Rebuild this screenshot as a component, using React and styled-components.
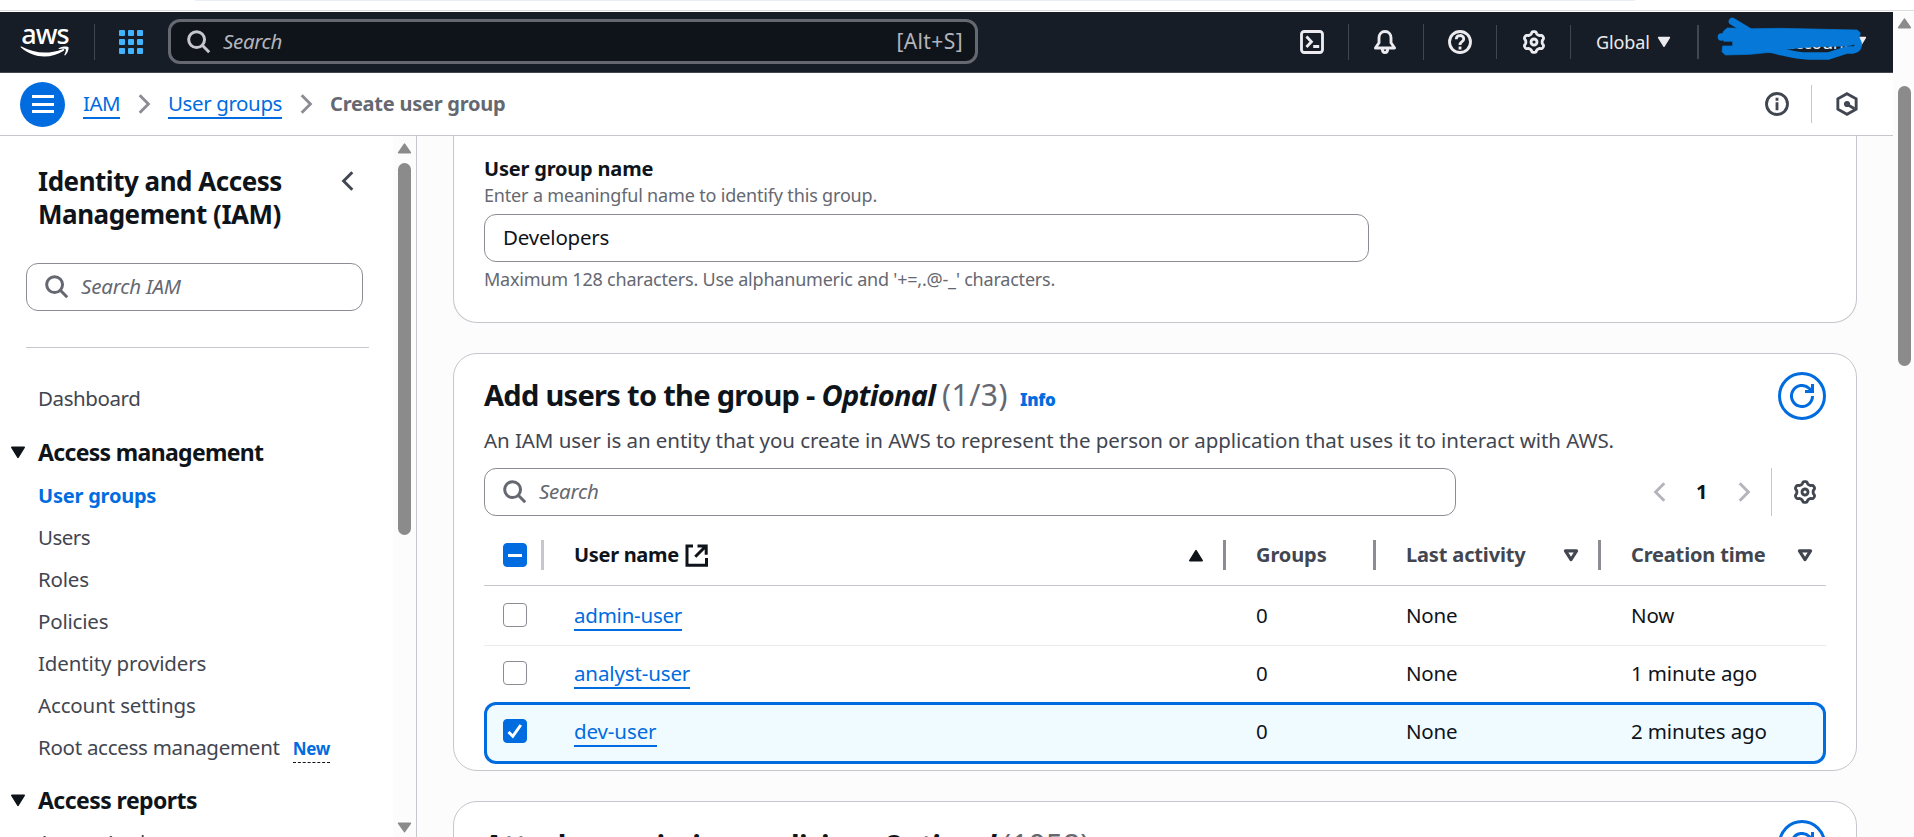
import React from "react";
import styled, { createGlobalStyle, css } from "styled-components";

const c = {
  blue: "#006ce0",
  ink: "#0f141a",
  body: "#424650",
  muted: "#656871",
  border: "#c6c6cd",
  inputBorder: "#8c8c94",
  canvas: "#fcfcfc",
  nav: "#161d26",
};

const Global = createGlobalStyle`
  * { box-sizing: border-box; }
  body { margin: 0; overflow: hidden; background: #fff; }
  svg { display: block; flex: none; }
`;

const Page = styled.div`
  width: 1914px;
  height: 837px;
  display: flex;
  flex-direction: column;
  overflow: hidden;
  background: #fff;
  color: ${c.ink};
  font-family: "Noto Sans", "Open Sans", sans-serif;
  font-size: 20.5px;
  line-height: 30px;
`;
const BrowserEdge = styled.div`
  flex: none;
  height: 12px;
  padding-left: 195px;
  border-bottom: 1px solid #fff;
  box-shadow: inset 0 -1px 0 #dadce0;
`;
const AddressBar = styled.div`
  width: 1440px;
  height: 1px;
  background: #e9eef8;
`;
const Frame = styled.div`
  flex: 1;
  min-height: 0;
  display: flex;
`;
const Console = styled.div`
  width: 1893px;
  display: flex;
  flex-direction: column;
  min-height: 0;
`;

const Txt = styled.span`
  white-space: pre;
  letter-spacing: ${(p) => p.$ls || 0}px;
`;

/* ---------- scrollbars ---------- */
const Track = styled.div`
  flex: none;
  width: ${(p) => p.$w}px;
  background: ${c.canvas};
  display: flex;
  flex-direction: column;
  align-items: center;
  padding: ${(p) => p.$pad};
`;
const Thumb = styled.div`
  width: 13px;
  height: ${(p) => p.$h}px;
  margin-top: ${(p) => p.$mt}px;
  border-radius: 7px;
  background: #8b8b8b;
`;
const ScrollArrow = ({ down }) => (
  <svg width="15" height="11" viewBox="0 0 15 11">
    <path
      d={down ? "M1.6 1.2h11.8L7.5 9.6z" : "M1.6 9.6h11.8L7.5 1.2z"}
      fill="#8b8b8b"
      stroke="#8b8b8b"
      strokeWidth="1.6"
      strokeLinejoin="round"
    />
  </svg>
);
const Grow = styled.div`
  flex: 1;
`;

/* ---------- icons ---------- */
const Icon = ({ size = 24, color = c.body, sw = 2, children }) => (
  <svg width={size} height={size} viewBox="0 0 16 16" fill="none" stroke={color} strokeWidth={sw}>
    {children}
  </svg>
);
const gearPath = (() => {
  const pts = [];
  for (let i = 0; i < 144; i++) {
    const a = (i / 144) * Math.PI * 2;
    const r = 6.2 + 0.8 * Math.tanh(1.7 * Math.cos(6 * a));
    pts.push(`${(8 + r * Math.sin(a)).toFixed(2)} ${(8 - r * Math.cos(a)).toFixed(2)}`);
  }
  return `M${pts.join("L")}Z`;
})();
const Gear = ({ color }) => (
  <Icon color={color} sw={1.9}>
    <path d={gearPath} strokeLinejoin="round" />
    <circle cx="8" cy="8" r="2" />
  </Icon>
);
const SearchIcon = ({ color = c.muted }) => (
  <Icon color={color} sw={2}>
    <circle cx="6.4" cy="6.4" r="5.3" />
    <path d="m10.2 10.200 4.600 4.600" />
  </Icon>
);
const Chevron = ({ left, color = c.inputBorder, sw = 2.9 }) => (
  <svg width="13" height="20" viewBox="0 0 13 20" fill="none" stroke={color} strokeWidth={sw}>
    <path d={left ? "M11.3 1.2 2.6 10l8.7 8.8" : "M1.7 1.2l8.7 8.8-8.7 8.8"} />
  </svg>
);
const Refresh = () => (
  <Icon color={c.blue}>
    <path d="M15 8a7 7 0 1 1-2.1-5l1.6 1.6" />
    <path d="M15 0v5h-5" />
  </Icon>
);
const Caret = ({ up, open, color = c.ink, w = 16, h = 13 }) => (
  <svg width={w} height={h} viewBox="0 0 16 13">
    <path
      d={up ? "M1.8 11.6h12.4L8 1.6z" : open ? "M2.4 1.9h11.2L8 10.6z" : "M1.8 1.4h12.4L8 11.4z"}
      fill={open ? "none" : color}
      stroke={color}
      strokeWidth={open ? 3.1 : 1.6}
      strokeLinejoin="round"
    />
  </svg>
);

/* ---------- top navigation ---------- */
const TopNav = styled.header`
  flex: none;
  height: 61px;
  display: flex;
  align-items: center;
  padding: 0 0 1px 20px;
  background: ${c.nav};
  border-bottom: 1px solid #424650;
`;
const Logo = styled.div`
  width: 50px;
  height: 60px;
  padding-top: 10px;
  display: flex;
  flex-direction: column;
  align-items: center;
  color: #fff;
  font-weight: 500;
  font-size: 27px;
  line-height: 24px;
`;
const NavRule = styled.div`
  flex: none;
  width: ${(p) => p.$w || 1}px;
  height: ${(p) => p.$h || 36}px;
  margin: 0 ${(p) => p.$r}px 0 ${(p) => p.$l}px;
  background: #424650;
`;
const AppGrid = styled.div`
  display: grid;
  grid-template-columns: repeat(3, 6px);
  gap: 3px;
`;
const Dot = styled.i`
  height: 6px;
  border-radius: 1px;
  background: #42b4ff;
`;
const NavSearch = styled.div`
  width: 810px;
  height: 45px;
  margin: 0 322px 0 25px;
  padding: 0 12px 0 16px;
  display: flex;
  align-items: center;
  gap: 12px;
  border: 3px solid ${c.muted};
  border-radius: 12px;
  background: ${c.ink};
  color: #b4b4bb;
`;
const Shortcut = styled(Txt)`
  padding-bottom: 2px;
  font-size: 21px;
`;
const Placeholder = styled(Txt)`
  flex: 1;
  padding-bottom: 2px;
  font-style: italic;
`;
const Region = styled.div`
  display: flex;
  align-items: center;
  gap: 7px;
  color: #ebebf0;
  font-size: 18px;
`;
const Account = styled(Region)`
  position: relative;
  width: 168px;
  padding-left: 62px;
  gap: 3px;
  height: 60px;
`;
const Scribble = styled.svg`
  position: absolute;
  left: -21px;
  top: -12px;
`;

/* ---------- breadcrumbs ---------- */
const CrumbBar = styled.nav`
  flex: none;
  height: 63px;
  display: flex;
  align-items: center;
  padding-left: 20px;
  border-bottom: 1px solid ${c.border};
`;
const MenuButton = styled.div`
  width: 45px;
  height: 45px;
  margin-right: 18px;
  display: flex;
  flex-direction: column;
  justify-content: center;
  align-items: center;
  gap: 4.5px;
  border-radius: 50%;
  background: ${c.blue};
`;
const Bar = styled.i`
  width: 22px;
  height: 3px;
  background: #fff;
`;
const Link = styled(Txt)`
  display: inline-block;
  height: 29px;
  line-height: 27px;
  color: ${c.blue};
  border-bottom: 2px solid ${c.blue};
`;
const CrumbGap = styled.div`
  margin: 0 17px 0 18px;
`;
const Current = styled(Txt)`
  flex: 1;
  font-size: 20px;
  font-weight: 700;
  color: ${c.muted};
`;
const BarRule = styled.div`
  width: 1px;
  height: ${(p) => p.$h}px;
  margin: 0 ${(p) => p.$r}px 0 ${(p) => p.$l}px;
  background: ${c.border};
`;

/* ---------- side navigation ---------- */
const Body = styled.div`
  flex: 1;
  min-height: 0;
  display: flex;
`;
const Side = styled.aside`
  flex: none;
  width: 417px;
  display: flex;
  overflow: hidden;
  border-right: 1px solid ${c.border};
`;
const SideContent = styled.div`
  width: 393px;
  height: 701px;
  overflow: hidden;
`;
const SideHead = styled.div`
  display: flex;
  padding: 29px 39px 0 38px;
`;
const SideTitle = styled.div`
  flex: 1;
  font-size: 26px;
  line-height: 33px;
  font-weight: 700;
  letter-spacing: -0.48px;
`;
const Collapse = styled.div`
  padding-top: 6px;
`;
const Field = styled.div`
  width: ${(p) => p.$w}px;
  height: 48px;
  padding-left: ${(p) => p.$pad || 17}px;
  display: flex;
  align-items: center;
  gap: 12px;
  border: 1px solid ${c.inputBorder};
  border-radius: 12px;
  background: #fff;
  color: ${(p) => (p.$filled ? c.ink : c.muted)};
`;
const Value = styled(Txt)`
  padding-bottom: 2px;
`;
const SideSearch = styled.div`
  width: 343px;
  margin: 32px 0 0 26px;
  padding-bottom: 36px;
  border-bottom: 1px solid ${c.border};
`;
const NavList = styled.div`
  display: flex;
  flex-direction: column;
  gap: 12px;
  padding: ${(p) => p.$pt}px 0 0 38px;
`;
const NavItem = styled.div`
  display: flex;
  align-items: center;
  height: 30px;
  white-space: nowrap;
  color: ${c.body};
  ${(p) =>
    p.$active &&
    css`
      padding-top: 1px;
      font-size: 20px;
      font-weight: 700;
      color: ${c.blue};
    `}
`;
const Section = styled.div`
  display: flex;
  align-items: center;
  gap: 12px;
  height: 30px;
  margin-top: ${(p) => p.$mt}px;
  padding-left: 10px;
  font-size: 23px;
  font-weight: 700;
`;
const NewTag = styled(Txt)`
  height: 27px;
  margin: 4px 0 0 13px;
  font-size: 17px;
  line-height: 25px;
  font-weight: 700;
  color: ${c.blue};
  border-bottom: 1px dashed ${c.ink};
`;

/* ---------- main content ---------- */
const Main = styled.main`
  flex: 1;
  min-width: 0;
  padding-left: 36px;
  display: flex;
  flex-direction: column;
  gap: 30px;
  overflow: hidden;
  background: ${c.canvas};
`;
const Card = styled.section`
  flex: none;
  width: 1404px;
  height: ${(p) => p.$h}px;
  padding: 0 30px;
  border: 1px solid ${c.border};
  border-radius: 24px;
  background: #fff;
  ${(p) =>
    p.$cut &&
    css`
      border-top: 0;
      border-radius: 0 0 24px 24px;
    `}
`;
const Label = styled.div`
  height: 47px;
  padding-top: 18px;
  font-size: 20px;
  font-weight: 700;
`;
const Hint = styled.div`
  height: ${(p) => p.$h}px;
  line-height: ${(p) => p.$lh}px;
  font-size: 18px;
  color: ${c.muted};
`;
const Heading = styled.div`
  display: flex;
  align-items: center;
  padding-top: 18px;
`;
const H2 = styled.h2`
  flex: 1;
  margin: 2px 0 0;
  font-size: 29px;
  line-height: 36px;
  font-weight: 700;
  white-space: pre;
`;
const Count = styled(Txt)`
  font-weight: 400;
  font-size: 30px;
  color: ${c.muted};
`;
const Info = styled(Txt)`
  margin-left: 12px;
  font-size: 17px;
  color: ${c.blue};
`;
const RoundButton = styled.div`
  width: 48px;
  height: 48px;
  display: grid;
  place-items: center;
  border: 3px solid ${c.blue};
  border-radius: 50%;
`;
const Desc = styled.div`
  height: 48px;
  padding-top: 5px;
  color: ${c.body};
`;
const Tools = styled.div`
  display: flex;
  align-items: center;
  padding-right: 9px;
`;
const PageNo = styled.div`
  margin: 0 31px 0 30px;
  width: 11px;
  font-size: 20px;
  font-weight: 700;
`;

const rowGrid = css`
  display: grid;
  grid-template-columns: 90px 682px 150px 225px 195px;
  align-items: center;
`;
const HeadRow = styled.div`
  ${rowGrid}
  height: 70px;
  border-bottom: 1px solid ${c.border};
  font-size: 20px;
  font-weight: 700;
  color: ${c.body};
`;
const HeadCell = styled.div`
  display: flex;
  align-items: center;
  height: 30px;
  color: ${(p) => (p.$dark ? c.ink : c.body)};
  margin-top: 9px;
  border-right: ${(p) => (p.$last ? 0 : 3)}px solid ${(p) => p.$rule || c.inputBorder};
  margin-right: ${(p) => p.$mr || 0}px;
  padding-right: ${(p) => p.$pr || 0}px;
`;
const Row = styled.div`
  ${rowGrid}
  height: ${(p) => p.$h}px;
  padding-bottom: 2px;
  border-bottom: ${(p) => (p.$line ? 1 : 0)}px solid #ebebf0;
  ${(p) =>
    p.$selected &&
    css`
      padding-bottom: 4px;
      background: #f0fbff;
      border-radius: 12px;
      box-shadow: inset 0 0 0 3px ${c.blue};
    `}
`;
const Check = styled.div`
  width: 24px;
  height: 24px;
  margin-left: 19px;
  display: grid;
  place-items: center;
  border-radius: 4px;
  border: 1.5px solid ${(p) => (p.$on ? c.blue : c.inputBorder)};
  background: ${(p) => (p.$on ? c.blue : "#fff")};
`;
const UserCell = styled.div`
  line-height: 0;
  padding-top: 3px;
`;

const navItems = [
  ["User groups", -0.22],
  ["Users", -0.5],
  ["Roles", -0.2],
  ["Policies", -0.2],
  ["Identity providers", -0.12],
  ["Account settings", -0.14],
  ["Root access management", -0.28],
];
const users = [
  { name: "admin-user", ls: -0.23, time: "Now", h: 60, line: true },
  { name: "analyst-user", ls: -0.13, time: "1 minute ago", h: 56 },
  { name: "dev-user", ls: -0.1, time: "2 minutes ago", h: 62, selected: true },
];

const NavIcon = ({ children }) => (
  <Icon color="#ebebf0" sw={1.9}>
    {children}
  </Icon>
);

export default function App() {
  return (
    <Page>
      <Global />
      <BrowserEdge>
        <AddressBar />
      </BrowserEdge>
      <Frame>
        <Console>
          <TopNav>
            <Logo>
              <Txt $ls={-1}>aws</Txt>
              <svg width="50" height="12" viewBox="0 0 50 12" fill="#fff">
                <path d="M1 1.6C0 .8 1 .2 2 .8 15 7.800 29 8.300 42.500 3.200c1.600-.6 2.500.6 1.200 1.500C31 13 14 13 1 1.600Z" />
                <path d="M38.800 2.200C41.500.2 47 0 48.300 1c1 1.300-.5 6-3 8.200-.6.4-1.200.1-.8-.6 1-2.200 1.700-4.600 1.200-5.400-.7-.8-3.600-.6-6.200-.2-.8.1-1.200-.3-.7-.8Z" />
              </svg>
            </Logo>
            <NavRule $l={24} $r={24} />
            <AppGrid>
              {Array.from({ length: 9 }, (_, i) => (
                <Dot key={i} />
              ))}
            </AppGrid>
            <NavSearch>
              <SearchIcon color="#c6c6cd" />
              <Placeholder $ls={-0.35}>Search</Placeholder>
              <Shortcut $ls={0.4}>[Alt+S]</Shortcut>
            </NavSearch>
            <NavIcon>
              <rect x="1" y="1" width="14" height="14" rx="1.8" />
              <path d="m4.300 4.400 3.300 3.500-3.300 3.500M8.800 11h4" />
            </NavIcon>
            <NavRule $l={24} $r={24} />
            <NavIcon>
              <path d="M8 1C5.500 1 4 2.900 4 5.200v3.300L1.600 12h12.800L12 8.500V5.200C12 2.900 10.500 1 8 1Z" strokeLinejoin="round" />
              <path d="M6.200 12.500c0 3.400 3.600 3.400 3.600 0" />
            </NavIcon>
            <NavRule $l={26} $r={24} />
            <NavIcon>
              <circle cx="8" cy="8" r="7" />
              <path d="M5.500 6.200c0-3.300 5-3.300 5-.2C10.500 8 8 7.600 8 10M8 11v2" />
            </NavIcon>
            <NavRule $l={24} $r={25} $h={34} />
            <Gear color="#ebebf0" />
            <NavRule $l={24} $r={25} $h={34} />
            <Region>
              <Txt $ls={-0.1}>Global</Txt>
              <Caret color="#ebebf0" w={14} h={12} />
            </Region>
            <NavRule $l={26} $r={24} $h={34} $w={2} />
            <Account>
              <Txt $ls={-0.3}>account</Txt>
              <Caret color="#ebebf0" w={14} h={12} />
              <Scribble width="168" height="73" viewBox="6 0 504 219">
                <g fill="#0578d8" stroke="#0578d8" strokeLinecap="round" strokeLinejoin="round">
                  <path d="M97 64l46 28" strokeWidth="22" fill="none" />
                  <circle cx="64" cy="111" r="11" strokeWidth="0" />
                  <path d="M64 108 72 92 82 84 160 86 240 85 472 90 481 99 478 112 484 130 440 138 340 140 265 147 210 157 150 163 76 165 66 155 68 138H98V124H72Z" strokeWidth="2" />
                  <path d="M205 146c50 10 75 22 120 22h60l55-18h20c12-2 16-10 14-20" strokeWidth="22" fill="none" />
                </g>
              </Scribble>
            </Account>
          </TopNav>

          <CrumbBar>
            <MenuButton>
              <Bar />
              <Bar />
              <Bar />
            </MenuButton>
            <Link $ls={-0.55}>IAM</Link>
            <CrumbGap>
              <Chevron />
            </CrumbGap>
            <Link $ls={-0.39}>User groups</Link>
            <CrumbGap>
              <Chevron />
            </CrumbGap>
            <Current $ls={-0.25}>Create user group</Current>
            <Icon sw={1.9}>
              <circle cx="8" cy="8" r="7" />
              <path d="M8 3.800v2M8 6.800v5.400" />
            </Icon>
            <BarRule $h={38} $l={22} $r={23} />
            <Icon sw={1.9}>
              <path d="M8 1.100 14.100 4.500v7L8 14.900 1.900 11.500v-7z" />
              <circle cx="8" cy="8" r="1.100" />
              <path d="m8.500 8.500 4.500 2.600" />
            </Icon>
            <BarRule $h={0} $l={33} $r={0} />
          </CrumbBar>

          <Body>
            <Side>
              <SideContent>
                <SideHead>
                  <SideTitle>
                    Identity and Access
                    <br />
                    Management (IAM)
                  </SideTitle>
                  <Collapse>
                    <Chevron left color={c.body} />
                  </Collapse>
                </SideHead>
                <SideSearch>
                  <Field $w={337} $pad={18}>
                    <SearchIcon />
                    <Placeholder $ls={-0.2}>Search IAM</Placeholder>
                  </Field>
                </SideSearch>
                <NavList $pt={35}>
                  <NavItem>
                    <Txt $ls={-0.42}>Dashboard</Txt>
                  </NavItem>
                </NavList>
                <Section $mt={24}>
                  <Caret />
                  <Txt $ls={-0.67}>Access management</Txt>
                </Section>
                <NavList $pt={13}>
                  {navItems.map(([t, ls], i) => (
                    <NavItem key={t} $active={i === 0}>
                      <Txt $ls={ls}>{t}</Txt>
                      {i === 6 && <NewTag $ls={-0.3}>New</NewTag>}
                    </NavItem>
                  ))}
                </NavList>
                <Section $mt={23}>
                  <Caret />
                  <Txt $ls={-0.55}>Access reports</Txt>
                </Section>
                <NavList $pt={12}>
                  <NavItem>
                    <Txt $ls={-0.45}>Access Analyzer</Txt>
                  </NavItem>
                </NavList>
              </SideContent>
              <Track $w={23} $pad="7px 0 4px">
                <ScrollArrow />
                <Thumb $h={372} $mt={9} />
                <Grow />
                <ScrollArrow down />
              </Track>
            </Side>

            <Main>
              <Card $h={187} $cut>
                <Label>
                  <Txt $ls={-0.2}>User group name</Txt>
                </Label>
                <Hint $h={31} $lh={24}>
                  <Txt $ls={-0.17}>Enter a meaningful name to identify this group.</Txt>
                </Hint>
                <Field $w={885} $pad={18} $filled>
                  <Value $ls={-0.2}>Developers</Value>
                </Field>
                <Hint $h={36} $lh={35}>
                  <Txt $ls={-0.21}>Maximum 128 characters. Use alphanumeric and '+=,.@-_' characters.</Txt>
                </Hint>
              </Card>

              <Card $h={418}>
                <Heading>
                  <H2>
                    <Txt $ls={-0.7}>Add users to the group - </Txt>
                    <Txt as="i" $ls={-0.7}>Optional </Txt>
                    <Count $ls={0.5}>(1/3)</Count>
                    <Info as="b" $ls={-0.3}>Info</Info>
                  </H2>
                  <RoundButton>
                    <Refresh />
                  </RoundButton>
                </Heading>
                <Desc>
                  <Txt $ls={-0.055}>
                    An IAM user is an entity that you create in AWS to represent the person or application that uses it to interact with AWS.
                  </Txt>
                </Desc>
                <Tools>
                  <Field $w={972} $pad={18}>
                    <SearchIcon />
                    <Placeholder $ls={-0.25}>Search</Placeholder>
                  </Field>
                  <Grow />
                  <Chevron left color="#b4b4bb" />
                  <PageNo>1</PageNo>
                  <Chevron color="#b4b4bb" />
                  <BarRule $h={48} $l={20} $r={21} />
                  <Gear />
                </Tools>

                <HeadRow>
                  <HeadCell $mr={30} $rule={c.border}>
                    <Check $on>
                      <svg width="14" height="3">
                        <rect width="14" height="3" fill="#fff" />
                      </svg>
                    </Check>
                  </HeadCell>
                  <HeadCell $dark $mr={30} $pr={19}>
                    <Txt $ls={-0.32}>User name </Txt>
                    <Icon color={c.ink}>
                      <path d="M6 2H2v12.800h13V10M9 2h5.800v5.800M14.500 2.200 7.500 9.200" />
                    </Icon>
                    <Grow />
                    <Caret up />
                  </HeadCell>
                  <HeadCell $mr={30}>
                    <Txt $ls={-0.1}>Groups</Txt>
                  </HeadCell>
                  <HeadCell $mr={30} $pr={19}>
                    <Txt $ls={-0.15}>Last activity</Txt>
                    <Grow />
                    <Caret open color={c.body} />
                  </HeadCell>
                  <HeadCell $last $pr={13}>
                    <Txt $ls={-0.17}>Creation time</Txt>
                    <Grow />
                    <Caret open color={c.body} />
                  </HeadCell>
                </HeadRow>
                {users.map((u) => (
                  <Row key={u.name} $h={u.h} $line={u.line} $selected={u.selected}>
                    <Check $on={u.selected}>
                      {u.selected && (
                        <svg width="16" height="16" viewBox="0 0 16 16" fill="none" stroke="#fff" strokeWidth="3">
                          <path d="m1.500 9 4.300 4.300L13.800 2" />
                        </svg>
                      )}
                    </Check>
                    <UserCell>
                      <Link $ls={u.ls}>{u.name}</Link>
                    </UserCell>
                    <Txt>0</Txt>
                    <Txt $ls={-0.25}>None</Txt>
                    <Txt $ls={-0.13}>{u.time}</Txt>
                  </Row>
                ))}
              </Card>

              <Card $h={418}>
                <Heading>
                  <H2>
                    <Txt $ls={-0.75}>Attach permissions policies - </Txt>
                    <Txt as="i" $ls={-0.7}>Optional </Txt>
                    <Count $ls={0.1}>(1058)</Count>
                  </H2>
                  <RoundButton>
                    <Refresh />
                  </RoundButton>
                </Heading>
              </Card>
            </Main>
          </Body>
        </Console>
        <Track $w={21} $pad="6px 0 0 1px">
          <ScrollArrow />
          <Thumb $h={280} $mt={57} />
        </Track>
      </Frame>
    </Page>
  );
}
